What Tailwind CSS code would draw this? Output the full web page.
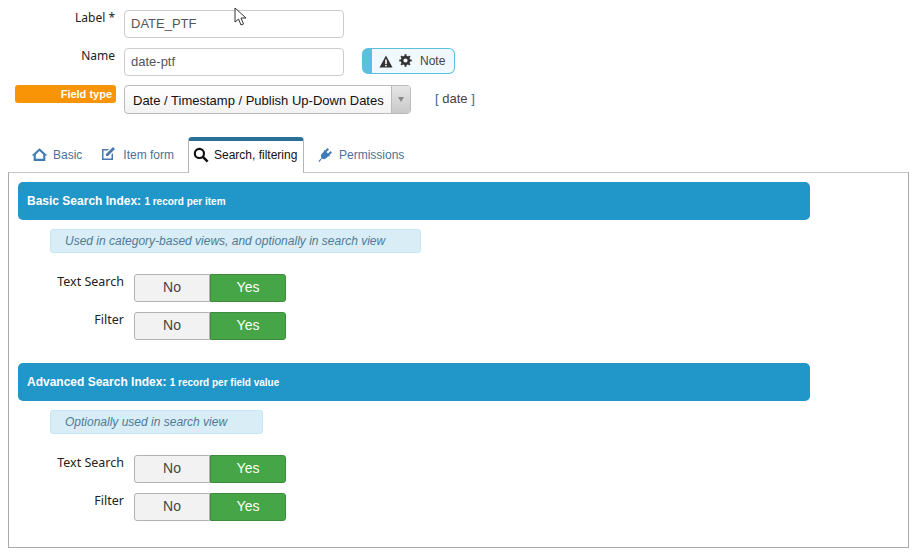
<!DOCTYPE html>
<html lang="en">
<head>
    <meta charset="UTF-8">
    <title>Field edit</title>
    <script src="https://cdn.jsdelivr.net/npm/@tailwindcss/browser@4"></script>
</head>
<body class="bg-white font-['Liberation_Sans',Arial,sans-serif] text-[12px] relative h-[557px] w-[921px] overflow-hidden">

    <!-- mouse pointer from the capture -->
    <svg class="absolute left-[234px] top-[7px]" width="14" height="20" viewBox="0 0 14 20">
        <path d="M1 1 L1 15 L4.5 12 L7 18 L9.5 17 L7 11 L12 11 Z" fill="#fff" stroke="#333" stroke-width="1"/>
    </svg>

    <div class="pt-[10px]">
        <!-- top form -->
        <div class="flex h-[28px]">
            <div class="w-[115px] text-right font-['Noto_Sans',sans-serif] text-[12px] leading-[16px] text-[#222]">Label *</div>
            <input class="ml-[9px] w-[220px] h-[28px] border border-[#ccc] rounded-[4px] px-[6px] pb-[1px] text-[13px] text-[#555]" value="DATE_PTF">
        </div>
        <div class="flex h-[28px] mt-[10px]">
            <div class="w-[115px] text-right font-['Noto_Sans',sans-serif] text-[12px] leading-[16px] text-[#222]">Name</div>
            <input class="ml-[9px] w-[220px] h-[28px] border border-[#ccc] rounded-[4px] px-[6px] pb-[1px] text-[13px] text-[#555]" value="date-ptf">
            <div class="ml-[18px] w-[93px] h-[26px] border border-[#5bc0de] rounded-[6px] bg-[#f0f9fd] border-l-[10px] flex items-center pl-[7px] text-[12px] text-[#444]">
                <svg width="14" height="13" viewBox="0 0 14 13"><path d="M7 0.5 L13.5 12.5 L0.5 12.5 Z" fill="#333"/><rect x="6.2" y="4.5" width="1.6" height="4.5" fill="#fff"/><rect x="6.2" y="9.8" width="1.6" height="1.6" fill="#fff"/></svg>
                <svg class="ml-[6px] -mt-[2px]" width="13" height="13" viewBox="0 0 13 13"><circle cx="6.5" cy="6.5" r="3.4" fill="none" stroke="#333" stroke-width="2.6"/><path d="M6.5 0.3V2.5M6.5 10.5V12.7M0.3 6.5H2.5M10.5 6.5H12.7M2.1 2.1L3.7 3.7M9.3 9.3L10.9 10.9M2.1 10.9L3.7 9.3M9.3 3.7L10.9 2.1" stroke="#333" stroke-width="2"/></svg>
                <span class="ml-[8px]">Note</span>
            </div>
        </div>
        <div class="flex mt-[9px] h-[29px]">
            <div class="ml-[15px] w-[101px] h-[18px] bg-[#f89406] rounded-[3px] text-white font-bold text-[11px] leading-[18px] text-right pr-[4px]">Field type</div>
            <div class="ml-[8px] w-[287px] h-[29px] border border-[#bbb] rounded-[4px] flex bg-gradient-to-b from-white to-[#f2f2f2]">
                <div class="flex-1 pl-[8px] text-[13px] leading-[29px] text-[#111]">Date / Timestamp / Publish Up-Down Dates</div>
                <div class="w-[19px] border-l border-[#bbb] bg-gradient-to-b from-[#e6e6e6] to-[#c8c8c8] rounded-r-[3px] flex items-center justify-center">
                    <span class="w-0 h-0 border-x-[3.5px] border-x-transparent border-t-[5px] border-t-[#888]"></span>
                </div>
            </div>
            <div class="ml-[24px] text-[13px] leading-[28px] text-[#444]"><span class="text-[#35688f]">[</span> date <span class="text-[#35688f]">]</span></div>
        </div>

        <!-- tabs -->
        <div class="flex items-end mt-[22px] h-[36px] pl-[31px] relative z-10 text-[#4f6f95]">
            <div class="flex items-center h-[35px] w-[157px]">
                <svg width="17" height="15" viewBox="0 0 16 14"><path d="M8 1 L15.5 8 L13.5 8 L13.5 13 L2.5 13 L2.5 8 L0.5 8 Z M4.5 7 L4.5 11 L11.5 11 L11.5 7 L8 3.8 Z" fill="#3f7cb5" fill-rule="evenodd"/></svg>
                <span class="ml-[5px]">Basic</span>
                <svg class="ml-[19px] -mt-[2px]" width="15" height="15" viewBox="0 0 15 15"><path d="M1 3 H8 L6.5 4.5 H2.5 V12.5 H10.5 V8.5 L12 7 V14 H1 Z" fill="#4a78ad"/><path d="M5 8 L12 1 L14 3 L7 10 L5 10 Z" fill="#4a78ad"/></svg>
                <span class="ml-[7px]">Item form</span>
            </div>
            <div class="w-[116px] h-[36px] bg-white border border-[#b5b5b5] border-b-0 border-t-[4px] border-t-[#2a6f96] rounded-t-[4px] flex items-center pl-[4px] text-[#111] mb-[-1px] pb-[4px]">
                <svg width="16" height="16" viewBox="0 0 15 15"><circle cx="6" cy="6" r="4.3" fill="none" stroke="#111" stroke-width="2"/><path d="M9.3 9.3 L13.7 13.7" stroke="#111" stroke-width="2.4"/></svg>
                <span class="ml-[5px]">Search, filtering</span>
            </div>
            <div class="flex items-center h-[35px] pl-[14px]">
                <svg width="15" height="15" viewBox="0 0 15 15"><path d="M0.5 14 L3.5 11 Q2 8.5 4 6.5 L6 4.5 L10.5 9 L8.5 11 Q6.5 13 4 11.5 L1.5 15 Z M7 3.5 L9.5 1 L11 2.5 L8.5 5 Z M10 6.5 L12.5 4 L14 5.5 L11.5 8 Z M5.5 4 L11 9.5 L12 8.5 L6.5 3 Z" fill="#3f7cb5"/></svg>
                <span class="ml-[6px]">Permissions</span>
            </div>
        </div>

        <!-- panel -->
        <div class="ml-[8px] w-[901px] h-[376px] border border-[#aaa] border-t-[#c4c4c4] px-[9px] pt-[9px]">
            <div class="w-[792px] h-[38px] bg-[#2196c9] rounded-[5px] pl-[9px] text-white font-bold text-[12px] leading-[38px]">Basic Search Index: <span class="text-[10px]">1 record per item</span></div>
            <div class="ml-[32px] mt-[9px] w-[371px] h-[24px] bg-[#d9edf7] border border-[#c5e6f3] rounded-[3px] pl-[14px] italic text-[12px] leading-[22px] text-[#4f7a94]">Used in category-based views, and optionally in search view</div>

            <div class="flex mt-[21px] h-[28px]">
                <div class="w-[106px] text-right font-['Noto_Sans',sans-serif] text-[12.5px] leading-[16px] text-[#222]">Text Search</div>
                <div class="ml-[10px] flex w-[152px] h-[28px] rounded-[3px] text-[14px] leading-[24px] text-center">
                    <div class="w-[76px] bg-[#f2f2f2] border border-[#b3b3b3] rounded-l-[3px] text-[#444]">No</div>
                    <div class="w-[76px] bg-[#46a546] border border-[#3d8b3d] rounded-r-[3px] text-white">Yes</div>
                </div>
            </div>
            <div class="flex mt-[10px] h-[28px]">
                <div class="w-[106px] text-right font-['Noto_Sans',sans-serif] text-[12.5px] leading-[16px] text-[#222]">Filter</div>
                <div class="ml-[10px] flex w-[152px] h-[28px] rounded-[3px] text-[14px] leading-[24px] text-center">
                    <div class="w-[76px] bg-[#f2f2f2] border border-[#b3b3b3] rounded-l-[3px] text-[#444]">No</div>
                    <div class="w-[76px] bg-[#46a546] border border-[#3d8b3d] rounded-r-[3px] text-white">Yes</div>
                </div>
            </div>

            <div class="mt-[23px] w-[792px] h-[38px] bg-[#2196c9] rounded-[5px] pl-[9px] text-white font-bold text-[12px] leading-[38px]">Advanced Search Index: <span class="text-[10px]">1 record per field value</span></div>
            <div class="ml-[32px] mt-[9px] w-[213px] h-[24px] bg-[#d9edf7] border border-[#c5e6f3] rounded-[3px] pl-[14px] italic text-[12px] leading-[22px] text-[#4f7a94]">Optionally used in search view</div>

            <div class="flex mt-[21px] h-[28px]">
                <div class="w-[106px] text-right font-['Noto_Sans',sans-serif] text-[12.5px] leading-[16px] text-[#222]">Text Search</div>
                <div class="ml-[10px] flex w-[152px] h-[28px] rounded-[3px] text-[14px] leading-[24px] text-center">
                    <div class="w-[76px] bg-[#f2f2f2] border border-[#b3b3b3] rounded-l-[3px] text-[#444]">No</div>
                    <div class="w-[76px] bg-[#46a546] border border-[#3d8b3d] rounded-r-[3px] text-white">Yes</div>
                </div>
            </div>
            <div class="flex mt-[10px] h-[28px]">
                <div class="w-[106px] text-right font-['Noto_Sans',sans-serif] text-[12.5px] leading-[16px] text-[#222]">Filter</div>
                <div class="ml-[10px] flex w-[152px] h-[28px] rounded-[3px] text-[14px] leading-[24px] text-center">
                    <div class="w-[76px] bg-[#f2f2f2] border border-[#b3b3b3] rounded-l-[3px] text-[#444]">No</div>
                    <div class="w-[76px] bg-[#46a546] border border-[#3d8b3d] rounded-r-[3px] text-white">Yes</div>
                </div>
            </div>
        </div>
    </div>
</body>
</html>
